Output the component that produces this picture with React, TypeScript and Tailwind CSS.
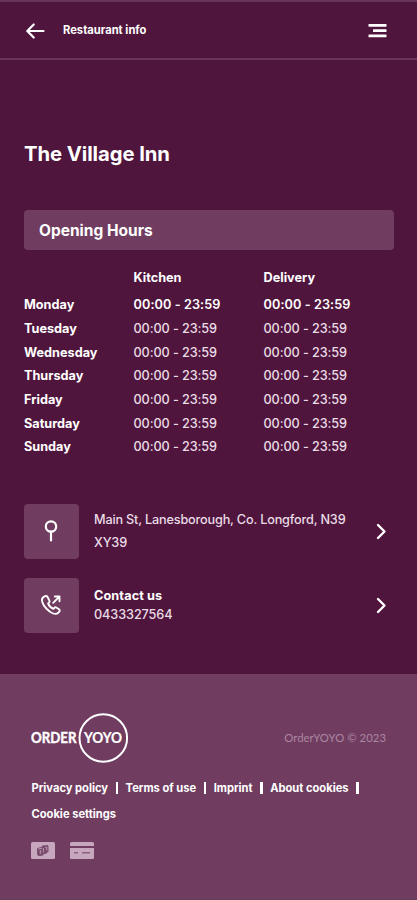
import type { ReactNode } from "react";

const openingHours = [
  { day: "Monday", kitchen: "00:00 - 23:59", delivery: "00:00 - 23:59", today: true },
  { day: "Tuesday", kitchen: "00:00 - 23:59", delivery: "00:00 - 23:59" },
  { day: "Wednesday", kitchen: "00:00 - 23:59", delivery: "00:00 - 23:59" },
  { day: "Thursday", kitchen: "00:00 - 23:59", delivery: "00:00 - 23:59" },
  { day: "Friday", kitchen: "00:00 - 23:59", delivery: "00:00 - 23:59" },
  { day: "Saturday", kitchen: "00:00 - 23:59", delivery: "00:00 - 23:59" },
  { day: "Sunday", kitchen: "00:00 - 23:59", delivery: "00:00 - 23:59" },
];

const Header = () => (
  <header className="flex h-[60px] items-center border-t-2 border-b-2 border-[#69345a] pl-[26px] pr-[30px] pt-px">
    <button aria-label="Back">
      <svg width="19" height="16" viewBox="0 0 19 16" fill="none" stroke="#fff" strokeWidth="2.2" strokeLinecap="round" strokeLinejoin="round">
        <path d="M17.5 8H1.5M7.7 1.5 1.3 8 7.7 14.5" />
      </svg>
    </button>
    <h2 className="ml-[18px] text-[11.2px] font-bold">Restaurant info</h2>
    <button aria-label="Menu" className="ml-auto">
      <svg width="19" height="14" viewBox="0 0 19 14" fill="#fff">
        <rect x="0.5" y="0" width="18" height="2.7" rx="0.5" />
        <rect x="5" y="5.3" width="13.5" height="2.7" rx="0.5" />
        <rect x="0.5" y="10.6" width="18" height="2.7" rx="0.5" />
      </svg>
    </button>
  </header>
);

const HoursTable = () => (
  <div className="grid grid-cols-[109.5px_130px_1fr] text-[12.7px] leading-[23.7px]">
    <span />
    <span className="mb-[3.4px] font-bold">Kitchen</span>
    <span className="mb-[3.4px] font-bold">Delivery</span>
    {openingHours.map(({ day, kitchen, delivery, today }) => (
      <div key={day} className="contents">
        <span className="font-bold">{day}</span>
        <span className={today ? "font-semibold tracking-[0.08px]" : "font-medium tracking-[-0.1px] text-[#e9dce5]"}>{kitchen}</span>
        <span className={today ? "font-semibold tracking-[0.08px]" : "font-medium tracking-[-0.1px] text-[#e9dce5]"}>{delivery}</span>
      </div>
    ))}
  </div>
);

interface InfoRowProps {
  icon: ReactNode;
  children: ReactNode;
}

const InfoRow = ({ icon, children }: InfoRowProps) => (
  <button className="flex h-[55px] w-full items-center text-left">
    <span className="flex size-[55px] shrink-0 items-center justify-center rounded-[4px] bg-[#703d60] pr-px">
      {icon}
    </span>
    <span className="ml-[15px] w-[265px] text-[12.7px]">{children}</span>
    <svg className="ml-auto mr-[6px]" width="11" height="17" viewBox="0 0 11 17" fill="none" stroke="#fff" strokeWidth="2.4" strokeLinecap="round" strokeLinejoin="round">
      <path d="m2 2 6.5 6.5L2 15" />
    </svg>
  </button>
);

const PinIcon = () => (
  <svg width="16" height="22" viewBox="0 0 16 22" fill="none" stroke="#fff" strokeWidth="2.2" strokeLinecap="round">
    <circle cx="8" cy="6.5" r="5.2" />
    <path d="M8 11.7V20.5" />
  </svg>
);

const PhoneIcon = () => (
  <svg width="22" height="22" viewBox="0 0 22 22" fill="none" stroke="#fff" strokeWidth="1.9" strokeLinecap="round" strokeLinejoin="round">
    <path d="M5.2 2.2 3 3.4C.8 5.2 2.2 10.2 6.3 14.5s9 6.7 11.8 4.5l1.3-1.6c.6-.8.4-1.7-.4-2.2l-2.7-1.7c-.8-.5-1.5-.3-2 .4l-.8 1c-2.1-.8-4.6-3.2-5.4-5.5l.9-.8c.7-.5.8-1.2.4-2L7.4 2.8c-.5-.8-1.3-1-2.2-.6Z" />
    <path d="m13.2 8.8 5.6-5.6M14.8 2.5h4.7v4.7" />
  </svg>
);

const Logo = () => (
  <svg width="98" height="52" viewBox="0 0 98 52" className="fill-white font-[Lato] text-[14.5px] font-bold">
    <text x="0" y="31.2" textLength="45.5" lengthAdjust="spacingAndGlyphs" stroke="#fff" strokeWidth="0.4">ORDER</text>
    <text x="53" y="31.2" textLength="38" lengthAdjust="spacingAndGlyphs" stroke="#fff" strokeWidth="0.2">YOYO</text>
    <circle cx="72.3" cy="26" r="23.8" fill="none" stroke="#fff" strokeWidth="2" />
  </svg>
);

const CashIcon = () => (
  <svg width="24" height="17" viewBox="0 0 24 17">
    <rect width="24" height="17" rx="1.5" fill="#c6a7bd" />
    <path d="M6 6.2 10 5l1.5-1.6L16.5 3l1 1v5.5l-2.5 2.2-2 .3-1.5 1.7-4 .3L6 12.5Z" fill="#7a4b6c" />
    <path d="m7.2 7 3.8-.8M9.3 8v4M12.3 6v4.5M14.3 5.5l1.5-.4v3.4" fill="none" stroke="#c6a7bd" strokeWidth="0.8" />
  </svg>
);

const CardIcon = () => (
  <svg width="24" height="17" viewBox="0 0 24 17">
    <path d="M1.5 0h21A1.5 1.5 0 0 1 24 1.5V4H0V1.5A1.5 1.5 0 0 1 1.5 0ZM0 6h24v9.5a1.5 1.5 0 0 1-1.5 1.5h-21A1.5 1.5 0 0 1 0 15.5Z" fill="#c6a7bd" />
    <path d="M4 10.7h4M12 10.7h8" stroke="#8c6080" strokeWidth="1.5" />
  </svg>
);

const Divider = () => <span className="mb-px h-[12px] w-[2.5px] bg-white" />;

const Footer = () => (
  <footer className="h-[226px] border-b border-[#604057] bg-[#703d60] pl-[31px] pr-[31px] pt-[38px]">
    <div className="flex items-center justify-between">
      <Logo />
      <span className="font-[Lato] text-[11.3px] tracking-[0.05px] text-[#ab86a0]">OrderYOYO © 2023</span>
    </div>
    <nav className="mt-[11px] flex flex-wrap items-center gap-x-[7.5px] pl-[0.5px] text-[11.15px] font-bold leading-[26px]">
      <a>Privacy policy</a>
      <Divider />
      <a>Terms of use</a>
      <Divider />
      <a>Imprint</a>
      <Divider />
      <a>About cookies</a>
      <Divider />
      <a className="w-full">Cookie settings</a>
    </nav>
    <div className="mt-[15px] flex gap-[15px]">
      <CashIcon />
      <CardIcon />
    </div>
  </footer>
);

export default function App() {
  return (
    <div className="flex h-[900px] w-[417px] flex-col overflow-hidden bg-[#50153d] font-[Inter,sans-serif] text-white">
      <Header />
      <main className="flex-1 px-6 pt-[80px]">
        <h1 className="text-[20.3px] font-bold leading-7 tracking-[-0.08px]">The Village Inn</h1>
        <h3 className="mt-[42px] mb-[16px] h-10 w-[370px] rounded-[4px] bg-[#703d60] pl-[15px] text-[15.5px] font-bold leading-[42px]">
          Opening Hours
        </h3>
        <HoursTable />
        <div className="mt-[44.6px] flex flex-col gap-[19px]">
          <InfoRow icon={<PinIcon />}>
            <span className="block font-medium leading-[23px] tracking-[-0.18px] text-[#e9dce5]">
              Main St, Lanesborough, Co. Longford, N39 XY39
            </span>
          </InfoRow>
          <InfoRow icon={<PhoneIcon />}>
            <span className="block font-bold leading-[19px] tracking-[0.1px]">Contact us</span>
            <span className="block font-medium leading-[19px] tracking-[-0.1px] text-[#e9dce5]">0433327564</span>
          </InfoRow>
        </div>
      </main>
      <Footer />
    </div>
  );
}
